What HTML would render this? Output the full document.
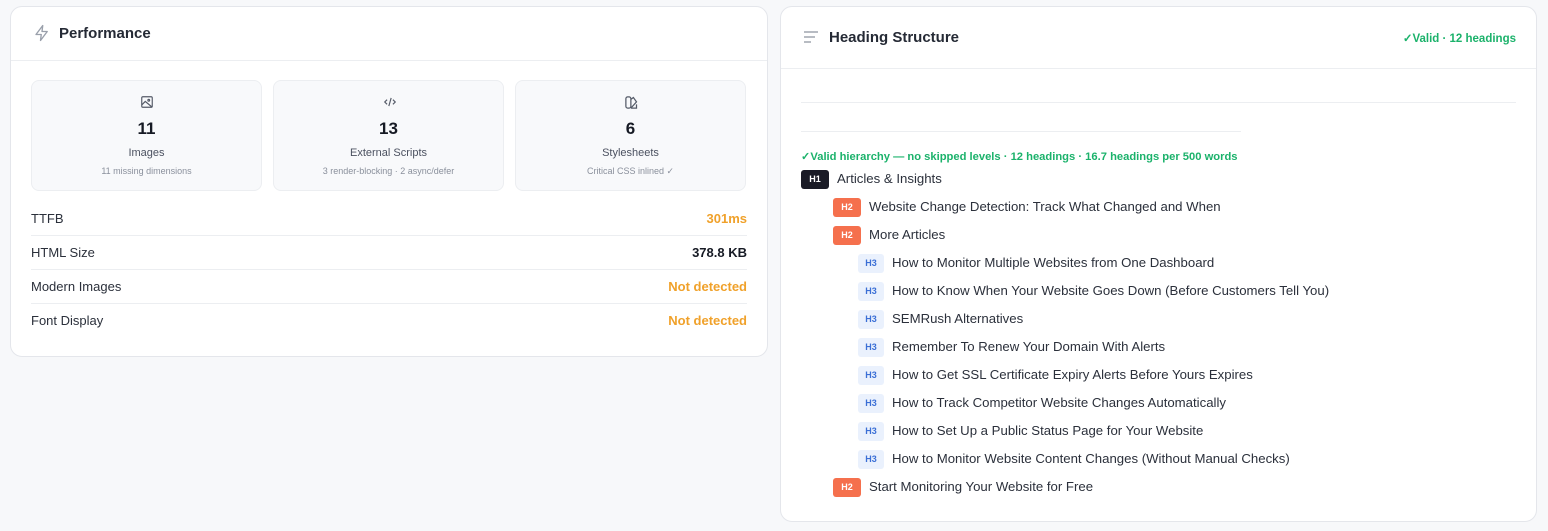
<!DOCTYPE html>
<html><head><style>
*{box-sizing:border-box;margin:0;padding:0}
body{width:1548px;height:531px;background:#f7f8fa;font-family:"Liberation Sans",sans-serif;position:relative;overflow:hidden;color:#1f2430}
.card{position:absolute;background:#fff;border:1px solid #e4e6eb;border-radius:12px}
.hdr{position:absolute;left:0;right:0;top:0;border-bottom:1px solid #eceef1}
.title{position:absolute;font-size:15px;font-weight:bold;color:#252a35}
.box{position:absolute;top:73px;width:231px;height:111px;background:#f8f9fb;border:1px solid #eceef1;border-radius:8px;text-align:center}
.box svg{position:absolute;left:108px;top:14px}
.num{position:absolute;top:38px;width:100%;font-size:17px;font-weight:bold;color:#161a24}
.lab{position:absolute;top:66px;width:100%;font-size:11px;color:#4b5160}
.sub{position:absolute;top:85px;width:100%;font-size:9px;color:#8a909c}
.row{position:absolute;left:20px;width:716px;height:34px;font-size:13px;color:#2b303b;border-bottom:1px solid #eceef1}
.row span{position:absolute;top:9px}
.row b{position:absolute;right:0;top:9px;font-size:13px}
.h{position:absolute;font-size:13.2px;color:#2b303b;white-space:nowrap}
.tag{display:inline-block;height:19px;border-radius:3px;font-size:9px;font-weight:bold;line-height:19px;text-align:center;vertical-align:middle;margin-right:8px}
.t1{width:28px;background:#1a1b26;color:#fff}
.t2{width:28px;background:#f5704d;color:#fff}
.t3{width:26px;background:#eaf1fd;color:#3b6fd6}
</style></head><body>
<div class="card" style="left:10px;top:6px;width:758px;height:351px">
 <div class="hdr" style="height:54px"></div>
 <svg style="position:absolute;left:22px;top:17px" width="18" height="18" viewBox="0 0 24 24" fill="none" stroke="#9aa0ab" stroke-width="1.8" stroke-linejoin="round"><path d="M13 2L4 14h7l-1 8 9-12h-7z"/></svg>
 <div class="title" style="left:48px;top:18px">Performance</div>
 <div class="box" style="left:20px">
  <svg width="14" height="14" viewBox="0 0 24 24" fill="none" stroke="#555b68" stroke-width="2"><rect x="3" y="3" width="18" height="18" rx="2"/><circle cx="15" cy="9" r="1.5"/><path d="M3 17l6-6 12 10"/></svg>
  <div class="num">11</div><div class="lab">Images</div><div class="sub">11 missing dimensions</div></div>
 <div class="box" style="left:262px">
  <svg width="16" height="14" viewBox="0 0 24 24" fill="none" stroke="#555b68" stroke-width="2"><path d="M7 8l-4 4 4 4M17 8l4 4-4 4M14 5l-4 14"/></svg>
  <div class="num">13</div><div class="lab">External Scripts</div><div class="sub">3 render-blocking · 2 async/defer</div></div>
 <div class="box" style="left:504px">
  <svg width="15" height="15" viewBox="0 0 24 24" fill="none" stroke="#555b68" stroke-width="2"><rect x="3" y="3" width="8" height="18" rx="3"/><path d="M11 7l4-3 5 7-9 10M11 21h9v-6"/></svg>
  <div class="num">6</div><div class="lab">Stylesheets</div><div class="sub">Critical CSS inlined ✓</div></div>
 <div class="row" style="top:195px"><span>TTFB</span><b style="color:#f0a12a">301ms</b></div>
 <div class="row" style="top:229px"><span>HTML Size</span><b style="color:#161a24">378.8 KB</b></div>
 <div class="row" style="top:263px"><span>Modern Images</span><b style="color:#f0a12a">Not detected</b></div>
 <div class="row" style="top:297px;border:none"><span>Font Display</span><b style="color:#f0a12a">Not detected</b></div>
</div>
<div class="card" style="left:780px;top:6px;width:757px;height:516px">
 <div class="hdr" style="height:62px"></div>
 <svg style="position:absolute;left:22px;top:23px" width="16" height="14" viewBox="0 0 16 14" stroke="#a0a5af" stroke-width="1.6"><path d="M1 2h14M1 7h11M1 12h7"/></svg>
 <div class="title" style="left:48px;top:22px">Heading Structure</div>
 <div style="position:absolute;right:20px;top:24px;font-size:11.5px;font-weight:bold;color:#1bb26b">✓Valid · 12 headings</div>
 <div style="position:absolute;left:20px;right:20px;top:95px;border-top:1px solid #eceef1"></div>
 <div style="position:absolute;left:20px;width:440px;top:124px;border-top:1px solid #eceef1"></div>
 <div style="position:absolute;left:20px;top:143px;font-size:11.2px;font-weight:bold;color:#1bb26b">✓Valid hierarchy — no skipped levels · 12 headings · 16.7 headings per 500 words</div>
 <div class="h" style="left:20px;top:163px"><span class="tag t1">H1</span>Articles &amp; Insights</div>
 <div class="h" style="left:52px;top:191px"><span class="tag t2">H2</span>Website Change Detection: Track What Changed and When</div>
 <div class="h" style="left:52px;top:219px"><span class="tag t2">H2</span>More Articles</div>
 <div class="h" style="left:77px;top:247px"><span class="tag t3">H3</span>How to Monitor Multiple Websites from One Dashboard</div>
 <div class="h" style="left:77px;top:275px"><span class="tag t3">H3</span>How to Know When Your Website Goes Down (Before Customers Tell You)</div>
 <div class="h" style="left:77px;top:303px"><span class="tag t3">H3</span>SEMRush Alternatives</div>
 <div class="h" style="left:77px;top:331px"><span class="tag t3">H3</span>Remember To Renew Your Domain With Alerts</div>
 <div class="h" style="left:77px;top:359px"><span class="tag t3">H3</span>How to Get SSL Certificate Expiry Alerts Before Yours Expires</div>
 <div class="h" style="left:77px;top:387px"><span class="tag t3">H3</span>How to Track Competitor Website Changes Automatically</div>
 <div class="h" style="left:77px;top:415px"><span class="tag t3">H3</span>How to Set Up a Public Status Page for Your Website</div>
 <div class="h" style="left:77px;top:443px"><span class="tag t3">H3</span>How to Monitor Website Content Changes (Without Manual Checks)</div>
 <div class="h" style="left:52px;top:471px"><span class="tag t2">H2</span>Start Monitoring Your Website for Free</div>
</div>
</body></html>
